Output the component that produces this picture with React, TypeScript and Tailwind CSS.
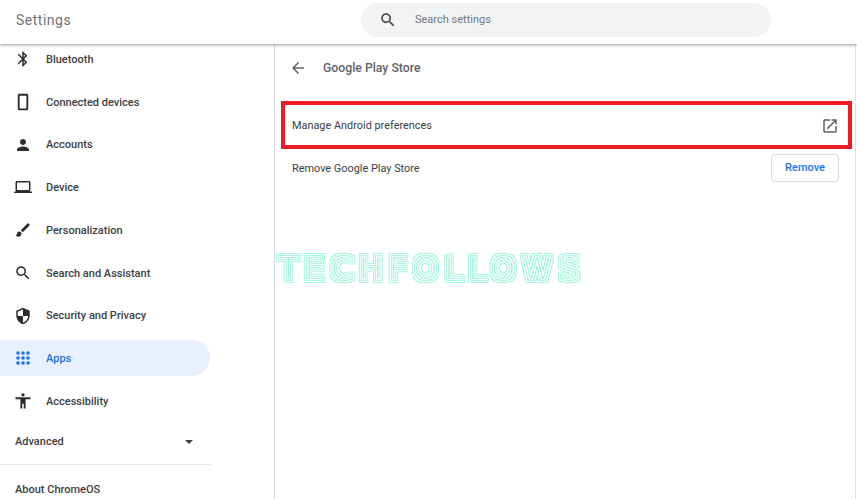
import React from 'react';

const ICONS: Record<string, string> = {
  bluetooth: 'M17.71 7.71L12 2h-1v7.59L6.41 5 5 6.41 10.59 12 5 17.59 6.41 19 11 14.41V22h1l5.71-5.71-4.3-4.29 4.3-4.29zM13 5.83l1.88 1.88L13 9.59V5.83zm1.88 10.46L13 18.17v-3.76l1.88 1.88z',
  phone: 'M17 1.01L7 1c-1.1 0-2 .9-2 2v18c0 1.1.9 2 2 2h10c1.1 0 2-.9 2-2V3c0-1.1-.9-1.99-2-1.99zM16.5 20.5h-9v-17h9v17z',
  person: 'M12 12c2.21 0 4-1.79 4-4s-1.79-4-4-4-4 1.79-4 4 1.79 4 4 4zm0 2c-2.67 0-8 1.34-8 4v2h16v-2c0-2.66-5.33-4-8-4z',
  laptop: 'M20 18c1.1 0 1.99-.9 1.99-2L22 6c0-1.1-.9-2-2-2H4c-1.1 0-2 .9-2 2v10c0 1.1.9 2 2 2H0v2h24v-2h-4zM4 6h16v10H4V6z',
  brush: 'M7 14c-1.66 0-3 1.34-3 3 0 1.31-1.16 2-2 2 .92 1.22 2.49 2 4 2 2.21 0 4-1.79 4-4 0-1.66-1.34-3-3-3zm13.71-9.37l-1.34-1.34c-.39-.39-1.02-.39-1.41 0L9 12.25 11.75 15l8.96-8.96c.39-.39.39-1.02 0-1.41z',
  search: 'M15.5 14h-.79l-.28-.27C15.41 12.59 16 11.11 16 9.5 16 5.91 13.09 3 9.5 3S3 5.91 3 9.5 5.91 16 9.5 16c1.61 0 3.09-.59 4.23-1.57l.27.28v.79l5 4.99L20.49 19l-4.99-5zm-6 0C7.01 14 5 11.99 5 9.5S7.01 5 9.5 5 14 7.01 14 9.5 11.99 14 9.5 14z',
  shield: 'M12 1L3 5v6c0 5.55 3.84 10.74 9 12 5.16-1.26 9-6.45 9-12V5l-9-4zm0 10.99h7c-.53 4.12-3.28 7.79-7 8.94V12H5V6.3l7-3.11v8.8z',
  accessibility: 'M12 1.5c1.2 0 2.2 1 2.2 2.2S13.200 5.900 12 5.900 9.800 4.900 9.800 3.700 10.800 1.500 12 1.500zM22 9.500h-6.500V22H13v-6.500h-2V22H8.500V9.500H2V7h20v2.500z',
  external: 'M19 19H5V5h7V3H5c-1.11 0-2 .9-2 2v14c0 1.1.89 2 2 2h14c1.1 0 2-.9 2-2v-7h-2v7zM14 3v2h3.59l-9.83 9.83 1.41 1.41L19 6.41V10h2V3h-7z',
  back: 'M20 11H7.83l5.59-5.59L12 4l-8 8 8 8 1.41-1.41L7.83 13H20v-2z',
};

const Icon = ({ name, className }: { name: string; className: string }) => (
  <svg viewBox="0 0 24 24" className={className} fill="currentColor">
    <path d={ICONS[name]} />
  </svg>
);

// Apps grid is round dots in the reference, not squares
const AppsIcon = () => (
  <svg viewBox="0 0 14 14" className="w-[14px] h-[14px] text-[#1a73e8]" fill="currentColor">
    {[2, 7, 12].map((cy) =>
      [2, 7, 12].map((cx) => <circle key={`${cx}-${cy}`} cx={cx} cy={cy} r="1.8" />)
    )}
  </svg>
);

const navItems = [
  { label: 'Bluetooth', icon: 'bluetooth' },
  { label: 'Connected devices', icon: 'phone' },
  { label: 'Accounts', icon: 'person' },
  { label: 'Device', icon: 'laptop' },
  { label: 'Personalization', icon: 'brush' },
  { label: 'Search and Assistant', icon: 'search' },
  { label: 'Security and Privacy', icon: 'shield' },
  { label: 'Apps', icon: 'apps', active: true },
  { label: 'Accessibility', icon: 'accessibility' },
];

const App: React.FC = () => {
  return (
    <div className="relative flex flex-col h-[499px] w-[857px] overflow-hidden bg-white font-['Roboto',sans-serif]">
      {/* Header */}
      <header className="relative z-10 flex items-center h-[44px] shrink-0 bg-white shadow-[0_1px_3px_rgba(0,0,0,0.4)]">
        <div className="w-[361px] pl-4 pb-[4px] text-[14px] tracking-[0.5px] text-[#6f7377]">Settings</div>
        <div className="flex items-center w-[410px] h-[34px] mb-[4px] rounded-full bg-[#f1f3f4] pl-[18px]">
          <Icon name="search" className="w-[18px] h-[18px] text-[#3c4043]" />
          <span className="ml-[18px] text-[11px] text-[#73777b]">Search settings</span>
        </div>
      </header>

      <div className="flex flex-1 min-h-0">
        {/* Sidebar */}
        <nav className="flex flex-col w-[275px] shrink-0 border-r border-[#dadce0] overflow-hidden">
          <ul className="flex flex-col gap-[6.75px] -mt-[3px]">
            {navItems.map((item) => (
              <li
                key={item.label}
                className={`flex items-center h-9 w-[210px] rounded-r-full ${item.active ? 'bg-[#e8f0fe]' : ''}`}
              >
                <span className="flex justify-center w-[46px]">
                  {item.icon === 'apps' ? (
                    <AppsIcon />
                  ) : (
                    <Icon name={item.icon} className="w-[18px] h-[18px] text-[#2b2e31]" />
                  )}
                </span>
                <span className={`pt-[2px] text-[11px] font-medium ${item.active ? 'text-[#1a73e8]' : 'text-[#3c4043]'}`}>
                  {item.label}
                </span>
              </li>
            ))}
          </ul>
          <div className="flex items-center justify-between w-[212px] h-[36px] mt-[5px] pl-[15px] pr-[19px] text-[11px] font-medium text-[#3c4043]">
            <span>Advanced</span>
            <span className="w-0 h-0 border-x-[4px] border-x-transparent border-t-[4px] border-t-[#3c4043]" />
          </div>
          <div className="w-[212px] h-px mt-[4px] bg-[#e8eaed]" />
          <div className="pl-[15px] mt-[17px] text-[11px] font-medium text-[#3c4043]">About ChromeOS</div>
        </nav>

        {/* Main panel */}
        <main className="relative flex flex-col w-[581px] border-r border-[#e0e0e0] pl-[6px] pr-[3px]">
          <div className="flex items-center h-[48px] pl-[8px]">
            <Icon name="back" className="w-[18px] h-[18px] text-[#5f6368]" />
            <span className="ml-[16px] text-[12.25px] font-medium text-[#5f6368]">Google Play Store</span>
          </div>
          <div className="flex items-center justify-between h-[48px] mt-[9px] border-4 border-[#ed1c24] pl-[7px] pr-[9px]">
            <span className="pt-[3px] text-[10.9px] text-[#3c4043]">Manage Android preferences</span>
            <Icon name="external" className="w-[18px] h-[18px] mt-[1px] text-[#5f6368]" />
          </div>
          <div className="flex items-center justify-between h-[38px] pl-[11px] pr-[13px]">
            <span className="pt-[2px] text-[10.9px] text-[#3c4043]">Remove Google Play Store</span>
            <button className="w-[68px] h-[28px] rounded border border-[#dadce0] bg-white text-[11px] font-medium text-[#1a73e8]">
              Remove
            </button>
          </div>

          {/* Watermark: one real text run, outlined into stripes by the filter */}
          <svg className="absolute left-0 top-[200px] w-[320px] h-[50px] overflow-visible">
            <defs>
              <filter id="stripes" x="-5%" y="-30%" width="110%" height="160%" colorInterpolationFilters="sRGB">
                <feMorphology in="SourceAlpha" operator="dilate" radius="4" result="d4" />
                <feMorphology in="SourceAlpha" operator="dilate" radius="3" result="d3" />
                <feMorphology in="SourceAlpha" operator="dilate" radius="2" result="d2" />
                <feMorphology in="SourceAlpha" operator="dilate" radius="1" result="d1" />
                <feFlood floodColor="#a6f5de" />
                <feComposite in2="d4" operator="in" result="l4" />
                <feFlood floodColor="#ffffff" />
                <feComposite in2="d3" operator="in" result="l3" />
                <feFlood floodColor="#a6f5de" />
                <feComposite in2="d2" operator="in" result="l2" />
                <feFlood floodColor="#ffffff" />
                <feComposite in2="d1" operator="in" result="l1" />
                <feFlood floodColor="#a6f5de" />
                <feComposite in2="SourceAlpha" operator="in" result="l0" />
                <feMerge>
                  <feMergeNode in="l4" />
                  <feMergeNode in="l3" />
                  <feMergeNode in="l2" />
                  <feMergeNode in="l1" />
                  <feMergeNode in="l0" />
                </feMerge>
              </filter>
            </defs>
            <text
              x="4"
              y="35"
              filter="url(#stripes)"
              fontFamily="'DejaVu Sans', sans-serif"
              fontWeight="200"
              fontSize="31"
              textLength="300"
              lengthAdjust="spacing"
            >
              TECHFOLLOWS
            </text>
          </svg>
        </main>
      </div>
    </div>
  );
};

export default App;
